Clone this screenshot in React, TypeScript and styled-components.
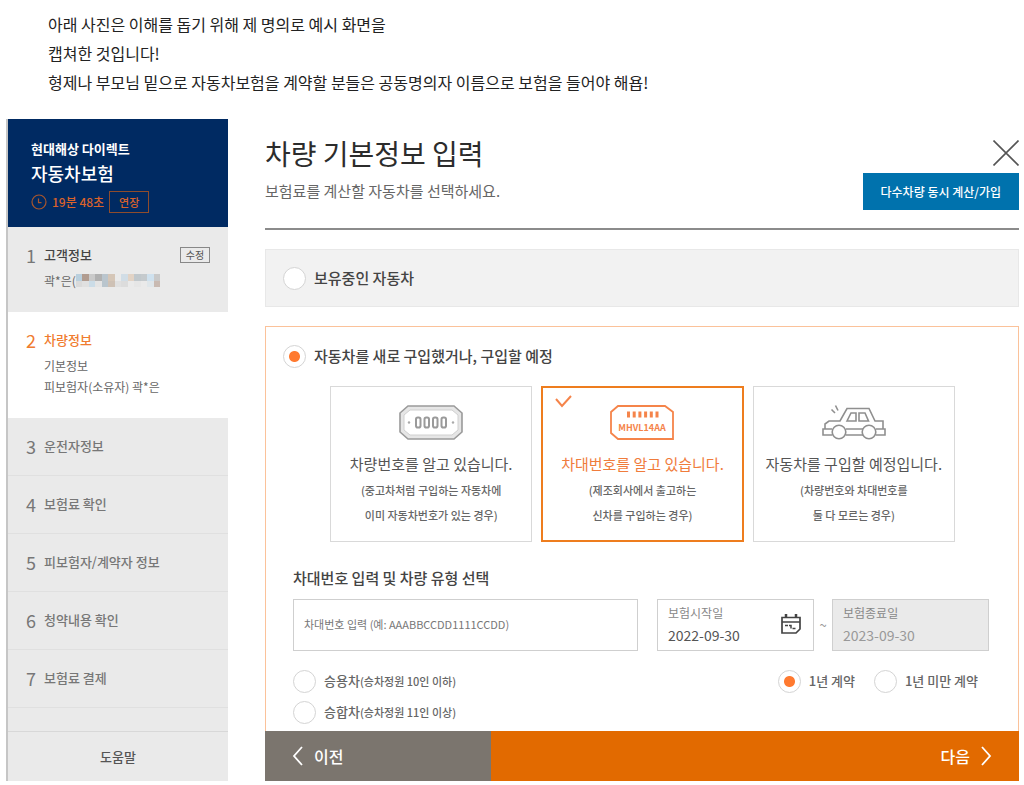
import React, { useState } from 'react';
import styled, { createGlobalStyle, css } from 'styled-components';

const GlobalStyle = createGlobalStyle`
  *, *::before, *::after { box-sizing: border-box; }
  body {
    margin: 0;
    background: #fff;
    color: #555;
    font-family: "Noto Sans CJK KR", "Noto Sans", sans-serif;
    font-size: 13px;
    line-height: 24px;
  }
  h1, h2, h3, p, ol, ul, fieldset { margin: 0; padding: 0; border: 0; list-style: none; }
  button, input { font: inherit; color: inherit; border-radius: 0; }
  button { cursor: pointer; padding: 0; border: 0; background: none; }
  svg { display: block; }
`;

const Page = styled.div`
  padding: 10px 5px 4px 6px;
`;

const Intro = styled.div`
  padding: 0 42px 22px;
  color: #222;
  font-size: 16px;
  line-height: 29px;
`;

const Shell = styled.div`
  display: flex;
  align-items: stretch;
`;

/* ---------- sidebar ---------- */

const Sidebar = styled.aside`
  flex: 0 0 222px;
  display: flex;
  flex-direction: column;
  border-left: 2px solid #c6c6c6;
  background: #eaeaea;
`;

const Brand = styled.div`
  height: 108px;
  padding: 19px 23px 0;
  background: #002a62;
  color: #fff;
`;

const BrandName = styled.p`
  font-size: 13px;
  font-weight: 700;
  line-height: 22px;
`;

const Product = styled.p`
  font-size: 18px;
  font-weight: 500;
  line-height: 26px;
`;

const Timer = styled.div`
  display: flex;
  align-items: center;
  gap: 5px;
  margin-top: 5px;
  color: #d9622b;
  font-size: 12px;
  font-weight: 500;
  line-height: 22px;
`;

const ExtendButton = styled.button`
  width: 40px;
  height: 22px;
  border: 1px solid #8f4c2c;
  font-size: 11px;
  line-height: 20px;
`;

const Step = styled.li<{ $state: 'done' | 'current' | 'next' }>`
  display: grid;
  grid-template-columns: 10px 1fr auto;
  column-gap: 8px;
  padding: 16px 18px 20px;
  color: #666;
  ${({ $state }) =>
    $state === 'next' &&
    css`
      padding: 16px 18px 17px;
      border-bottom: 1px solid #e0e0e0;
    `}
  ${({ $state }) =>
    $state === 'current' &&
    css`
      background: #fff;
    `}
`;

const StepNumber = styled.span<{ $active?: boolean }>`
  font-size: 18px;
  color: ${({ $active }) => ($active ? '#f07c30' : '#777')};
`;

const StepTitle = styled.span<{ $tone: 'dark' | 'active' | 'muted' }>`
  font-weight: 500;
  color: ${({ $tone }) => ({ dark: '#444', active: '#f07c30', muted: '#777' })[$tone]};
`;

const StepDetails = styled.div`
  grid-column: 2 / -1;
  margin-top: 3px;
  font-size: 12px;
  line-height: 21px;
  padding-bottom: 1px;
`;

const MaskedLine = styled.p`
  display: flex;
  align-items: center;
`;

const EditButton = styled.button`
  align-self: center;
  width: 30px;
  height: 16px;
  border: 1px solid #888;
  color: #555;
  font-size: 10px;
  line-height: 14px;
`;

const HelpButton = styled.button`
  height: 50px;
  margin-top: auto;
  border-top: 1px solid #d8d8d8;
  color: #555;
  font-weight: 500;
`;

/* ---------- main ---------- */

const Main = styled.main`
  flex: 1;
  min-width: 0;
  display: flex;
  flex-direction: column;
  margin-left: 37px;
`;

const Header = styled.header`
  display: flex;
  justify-content: space-between;
  padding: 14px 0 18px;
  border-bottom: 2px solid #8b8b8b;
`;

const Title = styled.h1`
  color: #2c2c2c;
  font-size: 28px;
  font-weight: 400;
  line-height: 40px;
`;

const Subtitle = styled.p`
  margin-top: 6px;
  color: #666;
  font-size: 15px;
`;

const HeaderActions = styled.div`
  display: flex;
  flex-direction: column;
  align-items: flex-end;
  gap: 7px;
  padding-top: 7px;
`;

const MultiCarButton = styled.button`
  height: 37px;
  padding: 0 18px;
  background: #0072ad;
  color: #fff;
  font-size: 12px;
  font-weight: 500;
`;

const Radio = styled.input.attrs({ type: 'radio' })`
  appearance: none;
  flex: none;
  width: 23px;
  height: 23px;
  margin: 0;
  border: 1px solid #d4d4d4;
  border-radius: 50%;
  background: #fff;
  &:checked {
    background: radial-gradient(circle, #ff7a30 0 5px, #fff 6px);
  }
`;

const Choice = styled.label<{ $large?: boolean }>`
  display: flex;
  align-items: center;
  gap: 8px;
  color: ${({ $large }) => ($large ? '#444' : '#666')};
  font-size: ${({ $large }) => ($large ? '15px' : '13px')};
  font-weight: 500;
`;

const ChoiceNote = styled.small`
  font-size: 11px;
`;

const OwnedOption = styled.div`
  margin-top: 19px;
  padding: 16px 17px 17px;
  border: solid #e8e8e8;
  border-width: 1px 1px 0;
  background: #f2f2f2;
  box-shadow: inset 0 -1px #e8e8e8;
`;

const NewCarPanel = styled.section`
  flex: 1;
  margin-top: 19px;
  padding: 17px 29px 7px 27px;
  border: solid #fbc29a;
  border-width: 1px 1px 0;
`;

const PanelChoice = styled.div`
  margin-left: -10px;
`;

const Cards = styled.div`
  display: grid;
  grid-template-columns: repeat(3, 1fr);
  gap: 9px;
  margin: 18px 34px 0 37px;
`;

const Card = styled.button<{ $selected: boolean }>`
  position: relative;
  display: flex;
  flex-direction: column;
  align-items: center;
  justify-content: flex-start;
  height: 156px;
  padding-top: ${({ $selected }) => ($selected ? 17 : 18)}px;
  border: ${({ $selected }) => ($selected ? '2px solid #ee7d1e' : '1px solid #d9d9d9')};
  background: #fff;
  white-space: nowrap;
`;

const CardTitle = styled.span<{ $selected: boolean }>`
  margin-top: 12px;
  color: ${({ $selected }) => ($selected ? '#f07c3c' : '#555')};
  font-size: 15px;
`;

const CardNote = styled.span`
  margin-top: 2px;
  color: #666;
  font-size: 11px;
  font-weight: 500;
  line-height: 25px;
`;

const CheckMark = styled.svg`
  position: absolute;
  top: 7px;
  left: 12px;
`;

const SectionTitle = styled.h2`
  margin-top: 24px;
  color: #444;
  font-size: 15px;
  font-weight: 500;
`;

const Fields = styled.div`
  display: grid;
  grid-template-columns: 1fr 332px;
  column-gap: 19px;
  margin-top: 9px;
`;

const VinInput = styled.input`
  display: block;
  width: 100%;
  height: 52px;
  padding: 0 10px 2px;
  border: 1px solid #cfcfcf;
  font-size: 11px;
  &::placeholder { color: #777; opacity: 1; }
`;

const Period = styled.div`
  display: flex;
  align-items: center;
  justify-content: space-between;
  color: #999;
`;

const DateBox = styled.div<{ $disabled?: boolean }>`
  display: flex;
  align-items: center;
  justify-content: space-between;
  width: 157px;
  height: 52px;
  padding: 0 12px 2px 10px;
  border: 1px solid #cfcfcf;
  background: ${({ $disabled }) => ($disabled ? '#eaeaea' : '#fff')};
  color: ${({ $disabled }) => ($disabled ? '#999' : '#555')};
`;

const DateLabel = styled.label`
  display: block;
  color: #888;
  font-size: 12px;
  line-height: 22px;
`;

const DateInput = styled.input`
  display: block;
  width: 90px;
  height: 22px;
  padding: 0;
  border: 0;
  background: none;
  font-size: 14px;
`;

const CarTypes = styled.fieldset`
  display: grid;
  gap: 7px;
  margin-top: 18px;
`;

const Terms = styled.fieldset`
  display: flex;
  align-items: flex-start;
  justify-content: flex-end;
  gap: 19px;
  margin-top: 18px;
  padding-right: 11px;
`;

const NavBar = styled.nav`
  display: grid;
  grid-template-columns: 3fr 7fr;
  height: 50px;
  color: #fff;
`;

const NavButton = styled.button<{ $kind: 'prev' | 'next' }>`
  display: flex;
  align-items: center;
  justify-content: ${({ $kind }) => ($kind === 'prev' ? 'flex-start' : 'flex-end')};
  gap: 11px;
  padding: 0 27px;
  background: ${({ $kind }) => ($kind === 'prev' ? '#7b756e' : '#e26a00')};
  font-size: 16px;
  font-weight: 500;
`;

/* ---------- drawings ---------- */

const ClockIcon = () => (
  <svg width="16" height="16" viewBox="0 0 16 16" fill="none" stroke="#a9562c" strokeWidth="1.2" aria-hidden="true">
    <circle cx="8" cy="8" r="7" />
    <path d="M7.5 4.5v4.2h3" />
  </svg>
);

const CloseIcon = () => (
  <svg width="26" height="26" viewBox="0 0 26 26" fill="none" stroke="#555" strokeWidth="1.6" aria-hidden="true">
    <path d="M0.5 0.5l25 25M25.5 0.5l-25 25" />
  </svg>
);

const MOSAIC = [
  ['#b9cfdd', '#b19c90', '#cacaca', '#b1b1b1', '#bac5cd', '#d5c6b7', '#eaeaea', '#d1dde6', '#e2d3c5', '#c1c8cc', '#c5cacd', '#cfe1ee', '#c9c9c9'],
  ['#dadada', '#e0e0e0', '#cbdce7', '#e4e4e4', '#b9c5cd', '#cec1b5', '#e0e0e0', '#dcdcdc', '#eaeaea', '#e6e6e6', '#eaeaea', '#dfe6ea', '#c9bab2'],
];

const Mosaic = () => (
  <svg width="84" height="13" viewBox="0 0 13 2" preserveAspectRatio="none" shapeRendering="crispEdges" aria-hidden="true">
    {MOSAIC.map((row, y) => row.map((fill, x) => <rect key={`${x}-${y}`} x={x} y={y} width="1" height="1" fill={fill} />))}
  </svg>
);

const PlateIcon = () => (
  <svg width="64" height="35" viewBox="0 0 64 35" fill="none" aria-hidden="true">
    <path d="M9 1h46l8 7v19l-8 7H9l-8-7V8z" fill="#e6e6e6" stroke="#9a9a9a" strokeWidth="1.6" />
    <path d="M11 5h42l6 5v15l-6 5H11l-6-5V10z" fill="#fff" stroke="#d0d0d0" />
    <g fill="none" stroke="#9a9a9a" strokeWidth="2">
      {[17, 25.5, 34, 42.5].map((x) => <rect key={x} x={x} y="12.5" width="4.5" height="10" rx="1.8" />)}
    </g>
    <circle cx="10" cy="17.5" r="1.2" fill="#aaa" />
    <circle cx="54" cy="17.5" r="1.2" fill="#aaa" />
  </svg>
);

const VinIcon = () => (
  <svg width="64" height="35" viewBox="0 0 64 35" fill="none" aria-hidden="true">
    <path d="M8 1h47l8 6v27H8l-7-6V7z" stroke="#f5844a" strokeWidth="1.8" />
    <path d="M17 9.5h32" stroke="#f5844a" strokeWidth="6" strokeDasharray="3 2.7" />
    <text x="32" y="26" textAnchor="middle" fontFamily="Noto Sans CJK KR, sans-serif" fontSize="9" fontWeight="700" fill="#f5844a">MHVL14AA</text>
  </svg>
);

const CarIcon = () => (
  <svg width="64" height="35" viewBox="0 0 64 35" fill="none" stroke="#8f8f8f" strokeWidth="1.6" aria-hidden="true">
    <path d="M3 24v-5l4-3h11l7-12.5h22L53 16h8v8" />
    <path d="M10 30H1v-6h9M24 24h17M24 30h17M54 24h9v6h-9" />
    <path d="M25 16l4-8h5v8zM37 8h6l3.500 8H37z" />
    <circle cx="17" cy="27" r="6.800" />
    <circle cx="47" cy="27" r="6.800" />
    <path d="M9.500 4.500l3.500 3.500M13.500 0.500l2.500 5" />
  </svg>
);

const CalendarIcon = () => (
  <svg width="20" height="20" viewBox="0 0 20 20" fill="none" stroke="#444" strokeWidth="1.7" aria-hidden="true">
    <path d="M1 3.500h18v11.500l-4 4H1zM1 8h18" />
    <path d="M5 0v4M15 0v4" strokeWidth="2.500" />
    <path d="M4 11.500h3M8 11.500h2v3M11.500 14.500h3" strokeWidth="1.500" />
  </svg>
);

const Chevron = ({ d }: { d: string }) => (
  <svg width="11" height="20" viewBox="0 0 11 20" fill="none" stroke="#fff" strokeWidth="1.8" aria-hidden="true">
    <path d={d} />
  </svg>
);

/* ---------- data ---------- */

const UPCOMING = ['운전자정보', '보험료 확인', '피보험자/계약자 정보', '청약내용 확인', '보험료 결제'];

const CARDS = [
  { title: '차량번호를 알고 있습니다.', note: ['(중고차처럼 구입하는 자동차에', '이미 자동차번호가 있는 경우)'], Icon: PlateIcon },
  { title: '차대번호를 알고 있습니다.', note: ['(제조회사에서 출고하는', '신차를 구입하는 경우)'], Icon: VinIcon },
  { title: '자동차를 구입할 예정입니다.', note: ['(차량번호와 차대번호를', '둘 다 모르는 경우)'], Icon: CarIcon },
];

export default function App() {
  const [selected, setSelected] = useState(1);

  return (
    <Page>
      <GlobalStyle />
      <Intro>
        <p>아래 사진은 이해를 돕기 위해 제 명의로 예시 화면을</p>
        <p>캡쳐한 것입니다!</p>
        <p>형제나 부모님 밑으로 자동차보험을 계약할 분들은 공동명의자 이름으로 보험을 들어야 해욥!</p>
      </Intro>

      <Shell>
        <Sidebar>
          <Brand>
            <BrandName>현대해상 다이렉트</BrandName>
            <Product>자동차보험</Product>
            <Timer>
              <ClockIcon />
              <span>19분 48초</span>
              <ExtendButton type="button">연장</ExtendButton>
            </Timer>
          </Brand>
          <ol>
            <Step $state="done">
              <StepNumber>1</StepNumber>
              <StepTitle $tone="dark">고객정보</StepTitle>
              <EditButton type="button">수정</EditButton>
              <StepDetails>
                <MaskedLine>곽*은(<Mosaic /></MaskedLine>
              </StepDetails>
            </Step>
            <Step $state="current">
              <StepNumber $active>2</StepNumber>
              <StepTitle $tone="active">차량정보</StepTitle>
              <StepDetails>
                <p>기본정보</p>
                <p>피보험자(소유자) 곽*은</p>
              </StepDetails>
            </Step>
            {UPCOMING.map((name, i) => (
              <Step key={name} $state="next">
                <StepNumber>{i + 3}</StepNumber>
                <StepTitle $tone="muted">{name}</StepTitle>
              </Step>
            ))}
          </ol>
          <HelpButton type="button">도움말</HelpButton>
        </Sidebar>

        <Main>
          <Header>
            <div>
              <Title>차량 기본정보 입력</Title>
              <Subtitle>보험료를 계산할 자동차를 선택하세요.</Subtitle>
            </div>
            <HeaderActions>
              <button type="button" aria-label="닫기"><CloseIcon /></button>
              <MultiCarButton type="button">다수차량 동시 계산/가입</MultiCarButton>
            </HeaderActions>
          </Header>

          <OwnedOption>
            <Choice $large><Radio name="car" />보유중인 자동차</Choice>
          </OwnedOption>

          <NewCarPanel>
            <PanelChoice>
              <Choice $large><Radio name="car" defaultChecked />자동차를 새로 구입했거나, 구입할 예정</Choice>
            </PanelChoice>

            <Cards>
              {CARDS.map(({ title, note, Icon }, i) => (
                <Card key={title} type="button" $selected={i === selected} aria-pressed={i === selected} onClick={() => setSelected(i)}>
                  {i === selected && (
                    <CheckMark width="17" height="14" viewBox="0 0 17 14" fill="none" stroke="#f5844a" strokeWidth="2" aria-hidden="true">
                      <path d="M1 4l6 7 9-10" />
                    </CheckMark>
                  )}
                  <Icon />
                  <CardTitle $selected={i === selected}>{title}</CardTitle>
                  <CardNote>{note[0]}<br />{note[1]}</CardNote>
                </Card>
              ))}
            </Cards>

            <SectionTitle>차대번호 입력 및 차량 유형 선택</SectionTitle>
            <Fields>
              <div>
                <VinInput aria-label="차대번호" placeholder="차대번호 입력 (예: AAABBCCDD1111CCDD)" />
                <CarTypes>
                  <Choice><Radio name="type" /><span>승용차<ChoiceNote>(승차정원 10인 이하)</ChoiceNote></span></Choice>
                  <Choice><Radio name="type" /><span>승합차<ChoiceNote>(승차정원 11인 이상)</ChoiceNote></span></Choice>
                </CarTypes>
              </div>
              <div>
                <Period>
                  <DateBox>
                    <div>
                      <DateLabel htmlFor="start">보험시작일</DateLabel>
                      <DateInput id="start" defaultValue="2022-09-30" />
                    </div>
                    <button type="button" aria-label="달력"><CalendarIcon /></button>
                  </DateBox>
                  ~
                  <DateBox $disabled>
                    <div>
                      <DateLabel htmlFor="end">보험종료일</DateLabel>
                      <DateInput id="end" defaultValue="2023-09-30" readOnly />
                    </div>
                  </DateBox>
                </Period>
                <Terms>
                  <Choice><Radio name="term" defaultChecked />1년 계약</Choice>
                  <Choice><Radio name="term" />1년 미만 계약</Choice>
                </Terms>
              </div>
            </Fields>
          </NewCarPanel>

          <NavBar>
            <NavButton type="button" $kind="prev"><Chevron d="M10 1l-8 9 8 9" />이전</NavButton>
            <NavButton type="button" $kind="next">다음<Chevron d="M1 1l8 9-8 9" /></NavButton>
          </NavBar>
        </Main>
      </Shell>
    </Page>
  );
}
